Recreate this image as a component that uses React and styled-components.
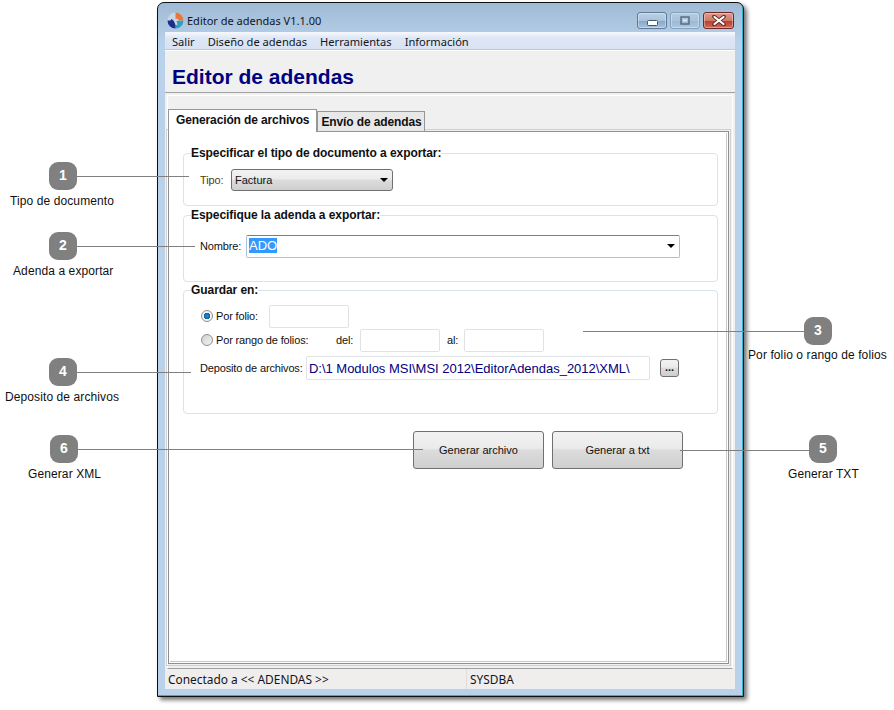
import React from 'react';
import styled, { createGlobalStyle } from 'styled-components';

const GlobalStyle = createGlobalStyle`
    html, body {
        margin: 0;
        background: #fff;
    }
    * {
        box-sizing: border-box;
    }
`

const callouts = [
    { n: 1, x: 49, y: 162, text: 'Tipo de documento', labelX: 10, labelY: 194 },
    { n: 2, x: 49, y: 232, text: 'Adenda a exportar', labelX: 13, labelY: 264 },
    { n: 3, x: 804, y: 317, text: 'Por folio o rango de folios', labelX: 748, labelY: 348 },
    { n: 4, x: 49, y: 358, text: 'Deposito de archivos', labelX: 5, labelY: 390 },
    { n: 5, x: 809, y: 435, text: 'Generar TXT', labelX: 788, labelY: 467 },
    { n: 6, x: 50, y: 435, text: 'Generar XML', labelX: 28, labelY: 467 },
];

const leaders = [
    { x: 77, y: 176, w: 112 },
    { x: 77, y: 246, w: 118 },
    { x: 583, y: 331, w: 221 },
    { x: 77, y: 372, w: 114 },
    { x: 77, y: 449, w: 346 },
    { x: 680, y: 450, w: 129 },
];

function App() {
    return (
        <Page>
            <GlobalStyle />
            <Window>
                <TitleBar>
                    <AppIcon />
                    <TitleText>Editor de adendas V1.1.00</TitleText>
                    <WindowButtons>
                        <MinButton><MinGlyph /></MinButton>
                        <MaxButton><MaxGlyph /></MaxButton>
                        <CloseButton><CloseGlyph /></CloseButton>
                    </WindowButtons>
                </TitleBar>
                <Client>
                    <MenuBar>
                        <MenuItem>Salir</MenuItem>
                        <MenuItem>Diseño de adendas</MenuItem>
                        <MenuItem>Herramientas</MenuItem>
                        <MenuItem>Información</MenuItem>
                    </MenuBar>
                    <Header>Editor de adendas</Header>
                    <TabFrame>
                        <TabRow>
                            <Tab $active>Generación de archivos</Tab>
                            <Tab>Envío de adendas</Tab>
                        </TabRow>
                        <Sheet>
                            <Group $height={60} $after={2}>
                                <Legend>Especificar el tipo de documento a exportar:</Legend>
                                <Row $top={8}>
                                    <Label $width={31} $color="#5a3a00">Tipo:</Label>
                                    <SelectButton>
                                        Factura
                                        <Arrow />
                                    </SelectButton>
                                </Row>
                            </Group>
                            <Group $height={74} $after={1}>
                                <Legend>Especifique la adenda a exportar:</Legend>
                                <Row $top={12}>
                                    <Label $width={46}>Nombre:</Label>
                                    <Combo>
                                        <Selected>ADO</Selected>
                                        <Arrow />
                                    </Combo>
                                </Row>
                            </Group>
                            <Group $height={131} $after={2}>
                                <Legend>Guardar en:</Legend>
                                <Row $top={7}>
                                    <Radio $checked />
                                    <Label $width={53}>Por folio:</Label>
                                    <Field $width={80} />
                                </Row>
                                <Row>
                                    <Radio />
                                    <Label $width={120}>Por rango de folios:</Label>
                                    <Label $width={24}>del:</Label>
                                    <Field $width={80} />
                                    <Label $width={17} $left={7}>al:</Label>
                                    <Field $width={80} />
                                </Row>
                                <Row $top={4}>
                                    <Label $width={106}>Deposito de archivos:</Label>
                                    <PathField>D:\1 Modulos MSI\MSI 2012\EditorAdendas_2012\XML\</PathField>
                                    <BrowseButton>...</BrowseButton>
                                </Row>
                            </Group>
                            <Actions>
                                <ActionButton>Generar archivo</ActionButton>
                                <ActionButton>Generar a txt</ActionButton>
                            </Actions>
                        </Sheet>
                    </TabFrame>
                    <StatusBar>
                        <StatusCell $width={302}>Conectado a &lt;&lt; ADENDAS &gt;&gt;</StatusCell>
                        <StatusCell>SYSDBA</StatusCell>
                    </StatusBar>
                </Client>
            </Window>
            {leaders.map((l) => (
                <Leader key={l.y + '-' + l.x} $x={l.x} $y={l.y} $w={l.w} />
            ))}
            {callouts.map((c) => (
                <React.Fragment key={c.n}>
                    <Bubble $x={c.x} $y={c.y}>{c.n}</Bubble>
                    <BubbleLabel $x={c.labelX} $y={c.labelY}>{c.text}</BubbleLabel>
                </React.Fragment>
            ))}
        </Page>
    )
}

export default App;

function AppIcon() {
    return (
        <svg width="17" height="17" viewBox="0 0 17 17">
            <circle cx="8.5" cy="8.5" r="8" fill="#c9d6e4" />
            <path d="M8.5 .5a8 8 0 0 1 8 8h-5l-1-2-2 .5z" fill="#e8783a" />
            <path d="M16.5 8.5a8 8 0 0 1-8 8v-3l2-1-1-3.500z" fill="#2f9fc4" />
            <path d="M8.500 16.500a8 8 0 0 1-8-8h3l1-1.500 2 1.500 1 2 1 2.500z" fill="#1c2f8c" />
        </svg>
    )
}

function MinGlyph() {
    return (
        <svg width="11" height="6" viewBox="0 0 11 6">
            <rect x=".5" y=".5" width="10" height="5" rx="1" fill="#fff" stroke="#46566a" />
        </svg>
    )
}

function MaxGlyph() {
    return (
        <svg width="10" height="9" viewBox="0 0 10 9">
            <rect x="1" y="1" width="8" height="7" fill="none" stroke="#56667a" strokeWidth="1.400" />
            <rect x="3" y="3.500" width="4" height="2" fill="#dfe8f1" />
        </svg>
    )
}

function CloseGlyph() {
    return (
        <svg width="14" height="11" viewBox="0 0 14 11">
            <path d="M2 1.500l10 8M12 1.500l-10 8" stroke="#5a2a28" strokeWidth="3.600" strokeLinecap="round" />
            <path d="M2.500 2l9 7M11.500 2l-9 7" stroke="#fff" strokeWidth="2.200" strokeLinecap="round" />
        </svg>
    )
}

const Page = styled.div`
    position: relative;
    width: 894px;
    height: 710px;
    padding: 2px 0 0 157px;
    overflow: hidden;
    background: #fff;
`

const Window = styled.div`
    width: 587px;
    height: 695px;
    padding: 0 8px 7px 7px;
    display: flex;
    flex-direction: column;
    background: #b9d1ea;
    background-image: linear-gradient(#9fbad6, #b9d1ea 40px);
    border: 1px solid #101010;
    border-radius: 7px 7px 0 0;
    box-shadow: inset -1px -1px 0 #2bb3d0, 3px 3px 4px rgba(0, 0, 0, .55);
`

const TitleBar = styled.div`
    height: 29px;
    flex: none;
    display: flex;
    align-items: center;
    padding-top: 5px;
    margin-left: 2px;
`

const TitleText = styled.span`
    margin-left: 3px;
    font: 11px "Noto Sans", sans-serif;
    color: #10151c;
`

const WindowButtons = styled.div`
    margin-left: auto;
    margin-right: 1px;
    display: flex;
    gap: 3px;
    align-self: flex-start;
    margin-top: 4px;
`

const WinButton = styled.div`
    width: 30px;
    height: 17px;
    display: flex;
    align-items: center;
    justify-content: center;
    border: 1px solid #5f7a96;
    border-radius: 3px;
    background: linear-gradient(#bcd0e4, #a9c3dd 50%, #88a8c8 55%, #a6c4e0);
    box-shadow: inset 0 0 0 1px rgba(255, 255, 255, .35);
`

const MinButton = styled(WinButton)`
    align-items: flex-end;
    padding-bottom: 2px;
`

const MaxButton = styled(WinButton)`
    border-color: #86a0b9;
    background: linear-gradient(#b4cbe2, #a9c3dd 50%, #9cb9d6 55%, #abc7e2);
`

const CloseButton = styled(WinButton)`
    width: 31px;
    border-color: #6a2a2a;
    background: linear-gradient(#df9a8c, #d17a68 50%, #b9402f 55%, #cf6b58);
`

const Client = styled.div`
    flex: 1;
    min-height: 0;
    display: flex;
    flex-direction: column;
    background: #f0f0f0;
`

const MenuBar = styled.div`
    height: 18px;
    flex: none;
    display: flex;
    align-items: center;
    padding: 1px 0 0 7px;
    gap: 13px;
    background: linear-gradient(#f6f9fe, #dfe7f5 35%, #d9e2f3);
    border-bottom: 1px solid #c3c9d4;
`

const MenuItem = styled.span`
    font: 11.1px "Noto Sans", sans-serif;
    color: #10151c;
`

const Header = styled.div`
    height: 43px;
    flex: none;
    padding: 14px 0 0 7px;
    font: bold 21px/24px "Liberation Sans", sans-serif;
    color: #000080;
    border-top: 1px solid #fff;
    border-bottom: 1px solid #a0a0a0;
`

const TabFrame = styled.div`
    flex: 1;
    min-height: 0;
    margin: 2px 2px 0;
    padding: 14px 3px 4px 0;
    display: flex;
    flex-direction: column;
    border: 1px solid #fff;
    border-bottom: 1px solid #a0a0a0;
`

const TabRow = styled.div`
    height: 22px;
    flex: none;
    display: flex;
    align-items: flex-end;
    position: relative;
    z-index: 1;
    margin-bottom: -1px;
`

const Tab = styled.div`
    height: ${(p) => (p.$active ? 23 : 21)}px;
    padding: ${(p) => (p.$active ? '3px 7px 0 7px' : '3px 2px 0 3px')};
    font: bold 12px "Liberation Sans", sans-serif;
    letter-spacing: -.12px;
    color: #101010;
    background: ${(p) => (p.$active ? '#fff' : '#e8e8e8')};
    border: 1px solid #969696;
    border-bottom: ${(p) => (p.$active ? 'none' : '1px solid #969696')};
    white-space: nowrap;
`

const Sheet = styled.div`
    flex: 1;
    min-height: 0;
    padding: 14px 10px 0 14px;
    background: #fff;
    border: 1px solid #8f8f8f;
    outline: 1px solid #d0d0d0;
    outline-offset: 1px;
    box-shadow: inset 0 0 0 1px #fff, inset -2px -2px 0 0 #c8c8c8;
`

const Group = styled.fieldset`
    margin: 0 0 ${(p) => p.$after}px;
    height: ${(p) => p.$height}px;
    padding: 0 0 0 16px;
    min-width: 0;
    border: 1px solid #d9e3ec;
    border-radius: 4px;
`

const Legend = styled.legend`
    margin-left: -9px;
    padding: 0;
    font: bold 12px/14px "Liberation Sans", sans-serif;
    letter-spacing: -.07px;
    color: #101010;
`

const Row = styled.div`
    display: flex;
    align-items: center;
    min-height: 24px;
    margin-top: ${(p) => p.$top || 0}px;
`

const Label = styled.span`
    flex: none;
    width: ${(p) => p.$width}px;
    margin-left: ${(p) => p.$left || 0}px;
    font: 11px "Liberation Sans", sans-serif;
    letter-spacing: -.15px;
    white-space: nowrap;
    color: ${(p) => p.$color || '#101010'};
`

const Arrow = styled.i`
    width: 0;
    height: 0;
    margin-left: auto;
    border-left: 4px solid transparent;
    border-right: 4px solid transparent;
    border-top: 4px solid #000;
`

const SelectButton = styled.div`
    width: 162px;
    height: 22px;
    display: flex;
    align-items: center;
    padding: 0 4px 1px 3px;
    font: 11px "Liberation Sans", sans-serif;
    color: #101010;
    background: linear-gradient(#f2f2f2, #ebebeb 45%, #dcdcdc 50%, #cfcfcf);
    border: 1px solid #707070;
    border-radius: 3px;
`

const Combo = styled.div`
    width: 434px;
    height: 23px;
    display: flex;
    align-items: center;
    padding: 0 4px 1px 2px;
    background: #fff;
    border: 1px solid #a9c3dc;
    border-top-color: #5a87ae;
    border-radius: 2px;
`

const Selected = styled.span`
    font: 13px/15px "Liberation Sans", sans-serif;
    color: #fff;
    background: #3399ff;
`

const Radio = styled.span`
    flex: none;
    width: 12px;
    height: 12px;
    margin: 0 3px 0 1px;
    border-radius: 50%;
    border: 1px solid #8e8f8f;
    background: ${(p) => (p.$checked
        ? 'radial-gradient(circle, #2c8fd0 0, #0f5e9c 45%, #f2f2f2 50%)'
        : 'linear-gradient(135deg, #d0d0d0, #f4f4f4)')};
`

const Field = styled.div`
    flex: none;
    width: ${(p) => p.$width}px;
    height: 23px;
    background: #fff;
    border: 1px solid #dfe3e8;
    border-radius: 2px;
`

const PathField = styled.div`
    flex: none;
    width: 344px;
    height: 24px;
    padding-left: 2px;
    font: 13px/24px "Liberation Sans", sans-serif;
    letter-spacing: -.02px;
    color: #000080;
    white-space: nowrap;
    overflow: hidden;
    background: #fff;
    border: 1px solid #dfe3e8;
    border-radius: 2px;
`

const BrowseButton = styled.div`
    flex: none;
    width: 19px;
    height: 18px;
    margin-left: 10px;
    text-align: center;
    font: bold 11px/15px "Liberation Sans", sans-serif;
    color: #101010;
    background: linear-gradient(#f2f2f2, #ebebeb 45%, #dcdcdc 50%, #cfcfcf);
    border: 1px solid #707070;
    border-radius: 3px;
`

const Actions = styled.div`
    display: flex;
    justify-content: flex-end;
    gap: 8px;
    margin-top: 17px;
    padding-right: 35px;
`

const ActionButton = styled.div`
    width: 131px;
    height: 38px;
    display: flex;
    align-items: center;
    justify-content: center;
    font: 11px "Liberation Sans", sans-serif;
    color: #101010;
    background: linear-gradient(#f2f2f2, #ebebeb 45%, #dcdcdc 50%, #cfcfcf);
    border: 1px solid #707070;
    border-radius: 3px;
`

const StatusBar = styled.div`
    height: 20px;
    flex: none;
    display: flex;
    align-items: center;
    background: #f0eded;
`

const StatusCell = styled.div`
    width: ${(p) => (p.$width ? p.$width + 'px' : 'auto')};
    flex: ${(p) => (p.$width ? 'none' : 1)};
    height: 100%;
    padding-left: 3px;
    font: 11.9px/20px "Noto Sans", sans-serif;
    color: #10151c;
    border-right: ${(p) => (p.$width ? '1px solid #dcdcdc' : 'none')};
`

const Leader = styled.div`
    position: absolute;
    left: ${(p) => p.$x}px;
    top: ${(p) => p.$y}px;
    width: ${(p) => p.$w}px;
    height: 1px;
    background: #808080;
`

const Bubble = styled.div`
    position: absolute;
    left: ${(p) => p.$x}px;
    top: ${(p) => p.$y}px;
    width: 28px;
    height: 28px;
    border-radius: 9px;
    background: #808080;
    color: #fff;
    text-align: center;
    font: bold 14px/27px "Liberation Sans", sans-serif;
`

const BubbleLabel = styled.div`
    position: absolute;
    left: ${(p) => p.$x}px;
    top: ${(p) => p.$y}px;
    font: 12px/14px "Liberation Sans", sans-serif;
    letter-spacing: .1px;
    color: #101010;
    white-space: nowrap;
`
